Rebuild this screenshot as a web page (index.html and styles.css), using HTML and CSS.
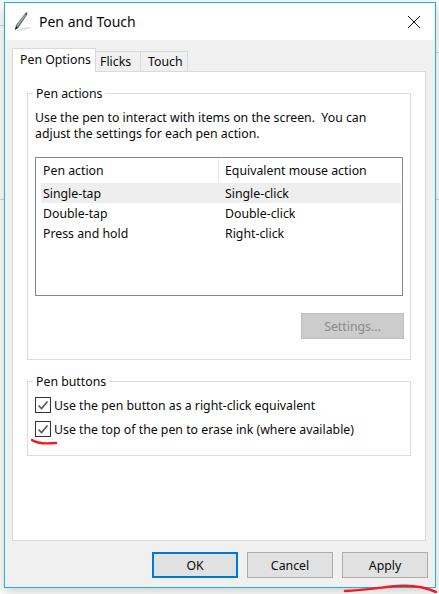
FILE: index.html
```html
<!DOCTYPE html>
<html lang="en">
  <head>
    <meta charset="UTF-8" />
    <title>Pen and Touch</title>
    <link rel="stylesheet" href="styles.css">
  </head>
  <body>
    <div class="window">
      <div class="titlebar">
        <svg class="title-icon" width="20" height="24" viewBox="0 0 20 24">
          <path d="M1 21 L12 17 L19 17.5 L8 20.5 Z" fill="#e2e2e2" />
          <path d="M1 20 L2 15 L11 3.5 L12.5 2 L13.5 3 L13 5 L4.5 17.5 Z" fill="#59636d" />
          <path d="M2.5 15.5 L11 4.5 L11.8 5.2 L3.5 16.5 Z" fill="#aeb6bd" />
          <path d="M1 20 L2 16.5 L3.8 18 Z" fill="#1c1c1c" />
        </svg>
        <span class="title">Pen and Touch</span>
        <svg class="close" width="12" height="12" viewBox="0 0 12 12">
          <path d="M0 0 L12 12 M12 0 L0 12" stroke="#111" stroke-width="1" fill="none" />
        </svg>
      </div>

      <div class="content">
        <div class="tabs">
          <div class="tab active">Pen Options</div>
          <div class="tab flicks">Flicks</div>
          <div class="tab touch">Touch</div>
        </div>

        <div class="pane">
          <fieldset class="group actions">
            <legend>Pen actions</legend>
            <p class="desc">Use the pen to interact with items on the screen.  You can
adjust the settings for each pen action.</p>
            <div class="list">
              <div class="list-head">
                <div class="col col-first">Pen action</div>
                <div class="col">Equivalent mouse action</div>
              </div>
              <div class="row selected">
                <div class="col col-first-row">Single-tap</div>
                <div class="col">Single-click</div>
              </div>
              <div class="row">
                <div class="col col-first-row">Double-tap</div>
                <div class="col">Double-click</div>
              </div>
              <div class="row">
                <div class="col col-first-row">Press and hold</div>
                <div class="col">Right-click</div>
              </div>
            </div>
            <div class="settings-row">
              <button class="btn settings" disabled>Settings...</button>
            </div>
          </fieldset>

          <fieldset class="group buttons">
            <legend>Pen buttons</legend>
            <div class="check-row">
              <span class="check">
                <svg width="14" height="14" viewBox="0 0 14 14"><path d="M2.5 7.5 L5.5 10.5 L11.5 3.5" stroke="#555" stroke-width="1.6" fill="none" /></svg>
              </span>
              <span>Use the pen button as a right-click equivalent</span>
            </div>
            <div class="check-row">
              <span class="check">
                <svg width="14" height="14" viewBox="0 0 14 14"><path d="M2.5 7.5 L5.5 10.5 L11.5 3.5" stroke="#555" stroke-width="1.6" fill="none" /></svg>
              </span>
              <span>Use the top of the pen to erase ink (where available)</span>
            </div>
          </fieldset>
        </div>

        <div class="footer">
          <button class="btn default">OK</button>
          <button class="btn">Cancel</button>
          <button class="btn">Apply</button>
        </div>
      </div>
    </div>

    <!-- red pen marks on top of the dialog -->
    <svg class="ink" width="439" height="594" viewBox="0 0 439 594">
      <path d="M32 440 C36 443 44 444 56 443" stroke="#ee1c25" stroke-width="2.5" fill="none" stroke-linecap="round" />
      <path d="M345 591 C365 590 385 587 397 586 C410 585 425 587 436 592" stroke="#ee1c25" stroke-width="2.5" fill="none" stroke-linecap="round" />
    </svg>
  </body>
</html>
```

FILE: styles.css
```css
* {
  box-sizing: border-box;
}

html,
body {
  margin: 0;
  height: 594px;
  overflow: hidden;
}

body {
  position: relative;
  padding: 2px 0 0 4px;
  font-family: "Noto Sans", sans-serif;
  font-size: 12.3px;
  color: #0a0a0a;
  background:
    linear-gradient(#d8d8d8, #d8d8d8) 0 25px / 4px 1px no-repeat,
    linear-gradient(#d8d8d8, #d8d8d8) 436px 52px / 3px 1px no-repeat,
    linear-gradient(#d8d8d8, #d8d8d8) 0 199px / 4px 1px no-repeat,
    linear-gradient(#d8d8d8, #d8d8d8) 436px 199px / 3px 1px no-repeat,
    #fff;
}

/* Dialog frame */
.window {
  display: flex;
  flex-direction: column;
  width: 432px;
  height: 586px;
  border: 1px solid #1fb8c6;
  box-shadow: 0 3px 12px rgba(0, 0, 0, 0.22);
  background: #f0f0f0;
}

.titlebar {
  display: flex;
  align-items: center;
  height: 37px;
  padding: 0 15px 0 9px;
  background: #fff;
}

.title-icon {
  margin-right: 5px;
}

.title {
  flex: 1;
  font-size: 14px;
}

.content {
  flex: 1;
  display: flex;
  flex-direction: column;
  padding: 8px 9px 9px 7px;
}

/* Tabs */
.tabs {
  display: flex;
  align-items: flex-end;
  height: 24px;
  margin-bottom: -1px;
}

.tab {
  height: 21px;
  line-height: 19px;
  background: #f0f0f0;
  border: 1px solid #d9d9d9;
  border-left: none;
}

.tab.active {
  position: relative;
  width: 84px;
  height: 24px;
  padding-left: 7px;
  line-height: 22px;
  background: #fff;
  border-left: 1px solid #d9d9d9;
  border-bottom: none;
}

.tab.flicks {
  width: 45px;
  padding-left: 4px;
}

.tab.touch {
  width: 47px;
  padding-left: 7px;
}

.pane {
  height: 470px;
  padding: 11px 14px 0;
  background: #fff;
  border: 1px solid #d9d9d9;
}

/* Group boxes */
.group {
  margin: 0;
  padding: 0 7px;
  border: 1px solid #dcdcdc;
}

.group legend {
  margin-left: -2px;
  padding: 2px 3px 0;
  line-height: 18px;
}

.actions {
  height: 277px;
}

.buttons {
  height: 85px;
  margin-top: 11px;
}

.desc {
  margin: 7px 0 0;
  line-height: 16px;
  white-space: pre-wrap;
}

/* List view */
.list {
  height: 139px;
  margin-top: 15px;
  border: 1px solid #82878c;
}

.list-head,
.row {
  display: grid;
  grid-template-columns: 178px 1fr;
  margin: 0 1px 0 5px;
}

.list-head {
  height: 25px;
  align-items: center;
}

.col {
  padding-left: 6px;
}

.col-first,
.col-first-row {
  padding-left: 2px;
}

.col-first {
  height: 24px;
  line-height: 24px;
  border-right: 1px solid #e5e5e5;
}

.row {
  height: 20px;
  line-height: 21px;
}

.row.selected {
  background: #eeeeee;
}

.settings-row {
  display: flex;
  justify-content: flex-end;
  margin: 17px -1px 0 0;
}

/* Buttons */
.btn {
  width: 86px;
  height: 26px;
  padding: 0;
  font: inherit;
  color: #0a0a0a;
  background: #e1e1e1;
  border: 1px solid #adadad;
}

.btn.settings {
  width: 103px;
  color: #8a8a8a;
  background: #cccccc;
  border-color: #bfbfbf;
}

.btn.default {
  border: 2px solid #0078d7;
}

.footer {
  display: flex;
  justify-content: flex-end;
  gap: 9px;
  margin: 11px -2px 0 0;
}

/* Checkboxes */
.check-row {
  display: flex;
  align-items: center;
  gap: 3px;
  height: 16px;
  margin-top: 8px;
}

.check-row:first-of-type {
  margin-top: 6px;
}

.check {
  display: flex;
  align-items: center;
  justify-content: center;
  width: 16px;
  height: 16px;
  border: 1px solid #333;
  background: #fff;
}

.ink {
  position: absolute;
  top: 0;
  left: 0;
  pointer-events: none;
}
```
